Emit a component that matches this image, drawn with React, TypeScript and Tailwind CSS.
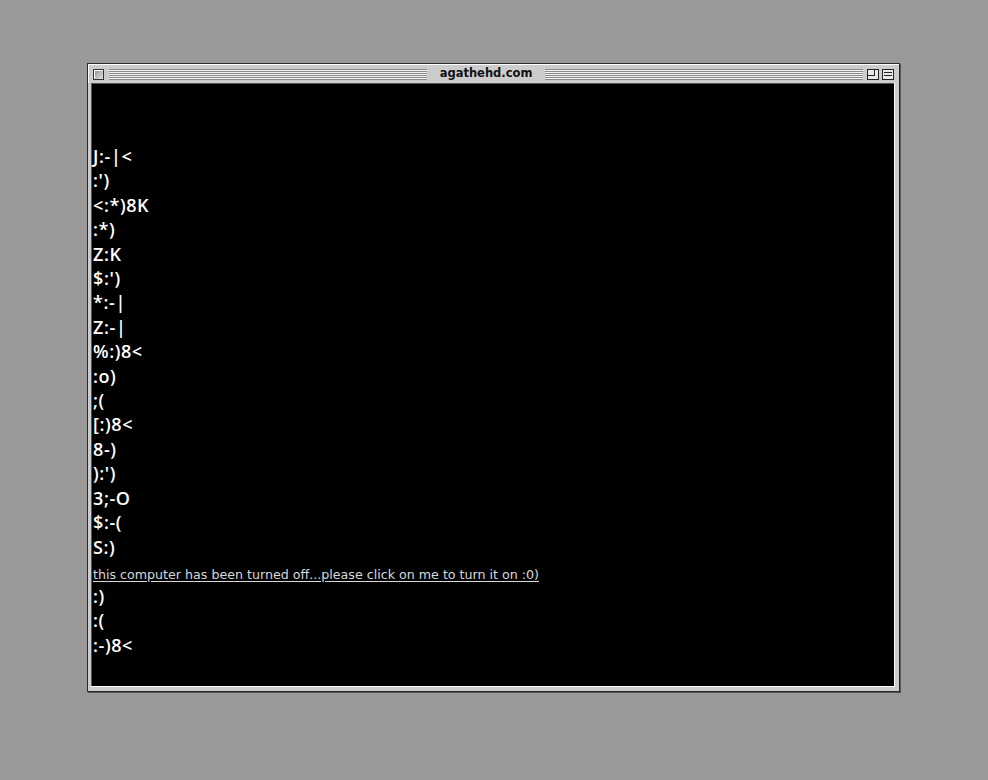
import React from "react";

const before = [
  "J:-|<",
  ":')",
  "<:*)8K",
  ":*)",
  "Z:K",
  "$:')",
  "*:-|",
  "Z:-|",
  "%:)8<",
  ":o)",
  ";(",
  "[:)8<",
  "8-)",
  "):')",
  "3;-O",
  "$:-(",
  "S:)",
];
const after = [":)", ":(", ":-)8<"];

function Stripes({ className }: { className: string }) {
  return (
    <div
      className={
        "h-[11px] bg-[repeating-linear-gradient(to_bottom,#8a8a8a_0px,#8a8a8a_1px,#f2f2f2_1px,#f2f2f2_2px)] " +
        className
      }
    />
  );
}

export default function App() {
  return (
    <div className="w-[988px] h-[780px] bg-[#999999] pt-[63px] pl-[87px]">
      <div className="w-[813px] h-[629px] border border-[#2a2a2a] bg-[#cccccc] flex flex-col shadow-[1px_1px_0_#555]">
        {/* title bar */}
        <div className="h-[19px] flex items-center pl-[4px] pr-[5px] border-t border-l border-white">
          <div className="w-[11px] h-[11px] border border-[#333] bg-[linear-gradient(135deg,#8a8a8a,#e6e6e6)] shadow-[inset_1px_1px_0_#fff]" />
          <Stripes className="ml-[5px] flex-1" />
          <div
            className="px-[13px] text-[11.5px] font-bold text-[#111] leading-none"
            style={{ fontFamily: '"DejaVu Sans", sans-serif' }}
          >
            agathehd.com
          </div>
          <Stripes className="flex-1" />
          <div className="ml-[4px] w-[12px] h-[11px] border border-[#222] bg-[#e8e8e8] relative">
            <div className="absolute left-0 top-0 w-[7px] h-[6px] border-r border-b border-[#222]" />
          </div>
          <div className="ml-[3px] w-[12px] h-[11px] border border-[#222] bg-[#e8e8e8] flex flex-col justify-center gap-[2px] px-[1px]">
            <div className="h-px bg-[#222]" />
            <div className="h-px bg-[#222]" />
          </div>
        </div>
        {/* content */}
        <div className="flex-1 ml-[3px] mr-[4px] mb-[4px] border-r border-b border-white">
          <div className="h-full bg-black border-t border-l border-[#555] pt-[60px] pl-[1px]">
            <div
              className="text-white text-[18px] font-semibold leading-[24.4px] tracking-[0.6px]"
              style={{ fontFamily: '"Open Sans", sans-serif' }}
            >
              {before.map((t, i) => (
                <div key={i} className="whitespace-pre">
                  {t}
                </div>
              ))}
              <div className="h-[25px] flex items-center pt-[7px]">
                <a
                  href="#"
                  className="text-[#d8d8d8] text-[12.65px] font-normal tracking-normal underline underline-offset-2"
                  style={{ fontFamily: '"DejaVu Sans", sans-serif' }}
                >
                  this computer has been turned off...please click on me to turn it on :0)
                </a>
              </div>
              {after.map((t, i) => (
                <div key={i} className="whitespace-pre">
                  {t}
                </div>
              ))}
            </div>
          </div>
        </div>
      </div>
    </div>
  );
}
